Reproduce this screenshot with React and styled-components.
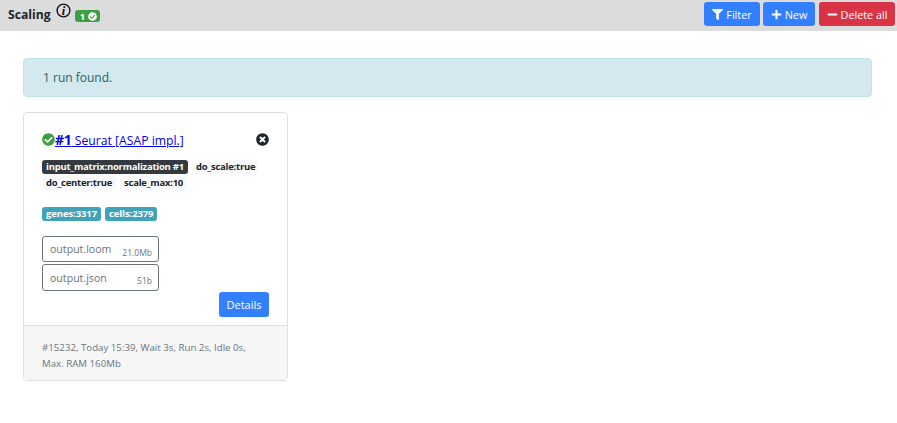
import React from "react";
import styled, { createGlobalStyle } from "styled-components";
import { FaFilter, FaPlus, FaMinus, FaCheckCircle, FaTimesCircle } from "react-icons/fa";

const GlobalStyle = createGlobalStyle`
  html, body {
    margin: 0;
    padding: 0;
    background: #fff;
    font-family: "Open Sans", "Noto Sans", sans-serif;
    color: #212529;
  }
  * { box-sizing: border-box; }
`;

const Header = styled.header`
  display: flex;
  justify-content: space-between;
  height: 31px;
  background: #dcdcdc;
  padding: 2px 2px 0 8px;
`;

const TitleGroup = styled.div`
  display: flex;
  align-items: flex-start;
`;

const Title = styled.h1`
  margin: 3px 0 0;
  font-size: 12.2px;
  line-height: 20px;
  font-weight: 700;
  color: #212529;
`;

const InfoIcon = styled.svg`
  width: 15px;
  height: 15px;
  margin: 1px 0 0 5px;
`;

const CountBadge = styled.span`
  display: inline-flex;
  align-items: center;
  gap: 3px;
  height: 12px;
  margin: 8px 0 0 4px;
  padding: 0 3px 0 5px;
  border-radius: 3px;
  background: #3f9f3f;
  color: #fff;
  font-size: 9.5px;
  font-weight: 700;
`;

const Actions = styled.div`
  display: flex;
  gap: 3px;
`;

const ActionButton = styled.button`
  display: flex;
  align-items: center;
  justify-content: center;
  gap: 3px;
  width: ${(p) => p.$width}px;
  height: 24px;
  margin-left: ${(p) => (p.$danger ? 1 : 0)}px;
  padding: 0;
  border: none;
  border-radius: 3px;
  background: ${(p) => (p.$danger ? "#d93347" : "#327fff")};
  color: #fff;
  font-family: inherit;
  font-size: 10.8px;
`;

const Main = styled.main`
  padding: 27px 25px 0 23px;
`;

const Alert = styled.div`
  height: 39px;
  margin-bottom: 15px;
  padding: 0 19px;
  display: flex;
  align-items: center;
  background: #d3e9ef;
  border: 1px solid #bee5eb;
  border-radius: 4px;
  color: #24616c;
  font-size: 12px;
`;

const Card = styled.section`
  width: 265px;
  height: 269px;
  display: flex;
  flex-direction: column;
  border: 1px solid #dfdfdf;
  border-radius: 4px;
  background: #fff;
`;

const CardBody = styled.div`
  flex: 1;
  display: flex;
  flex-direction: column;
  padding: 16px 18px 8px;
`;

const CardHead = styled.div`
  display: flex;
  align-items: center;
  justify-content: space-between;
  height: 20px;
  font-size: 13px;
`;

const RunTitle = styled.div`
  display: flex;
  align-items: center;
`;

const RunLink = styled.a`
  color: #0000ee;
  text-decoration: underline;
  font-size: 12.2px;
  b {
    font-size: 14px;
    font-weight: 700;
    letter-spacing: -0.2px;
  }
`;

const TagRow = styled.div`
  display: flex;
  flex-wrap: wrap;
  gap: 2px 4px;
  margin-top: ${(p) => p.$top}px;
`;

const tagSpacing = { dark: "-0.24px", light: "-0.25px", info: "-0.1px" };
const tagBackground = { dark: "#343a40", light: "#f8f9fa", info: "#3fa2b8" };

const Tag = styled.span`
  display: inline-block;
  padding: 0 4px;
  height: 14px;
  line-height: 14px;
  border-radius: 3px;
  font-size: 9.5px;
  font-weight: 700;
  white-space: nowrap;
  letter-spacing: ${(p) => tagSpacing[p.$kind]};
  color: ${(p) => (p.$kind === "light" ? "#212529" : "#fff")};
  background: ${(p) => tagBackground[p.$kind]};
`;

const FileBox = styled.div`
  width: 117px;
  height: ${(p) => (p.$tall ? 27 : 26)}px;
  padding: 0 6px 0 7px;
  display: flex;
  justify-content: space-between;
  border: 1px solid #6c757d;
  border-radius: 3px;
  color: #6c757d;
`;

const FileName = styled.span`
  font-size: 10.6px;
  line-height: ${(p) => (p.$tall ? 26 : 24)}px;
`;

const FileSize = styled.span`
  font-size: 8.5px;
  line-height: 12px;
  margin-top: 10px;
`;

const Files = styled.div`
  display: flex;
  flex-direction: column;
  gap: 2px;
  margin-top: 15px;
`;

const DetailsRow = styled.div`
  display: flex;
  justify-content: flex-end;
  margin-top: 1px;
`;

const DetailsButton = styled.button`
  width: 50px;
  height: 25px;
  padding: 0;
  border: none;
  border-radius: 3px;
  background: #327fff;
  color: #fff;
  font-family: inherit;
  font-size: 11px;
`;

const CardFooter = styled.footer`
  height: 55px;
  padding: 14px 18px 0;
  background: #f6f6f6;
  border-top: 1px solid #dfdfdf;
  color: #6c757d;
  font-size: 9.7px;
  line-height: 16px;
`;

export default function App() {
  return (
    <>
      <GlobalStyle />
      <Header>
        <TitleGroup>
          <Title>Scaling</Title>
          <InfoIcon viewBox="0 0 15 15">
            <circle cx="7.5" cy="7.5" r="6.4" fill="none" stroke="#111" strokeWidth="1.4" />
            <text x="7.5" y="11.6" textAnchor="middle" fontFamily="Liberation Serif" fontStyle="italic" fontWeight="700" fontSize="12.5" fill="#111">i</text>
          </InfoIcon>
          <CountBadge>
            1 <FaCheckCircle size={9} />
          </CountBadge>
        </TitleGroup>
        <Actions>
          <ActionButton $width={56}><FaFilter size={11} /> Filter</ActionButton>
          <ActionButton $width={52}><FaPlus size={11} /> New</ActionButton>
          <ActionButton $width={76} $danger><FaMinus size={11} /> Delete all</ActionButton>
        </Actions>
      </Header>
      <Main>
        <Alert>1 run found.</Alert>
        <Card>
          <CardBody>
            <CardHead>
              <RunTitle>
                <FaCheckCircle size={13} color="#3f9f3f" />
                <RunLink href="#"><b>#1</b> Seurat [ASAP impl.]</RunLink>
              </RunTitle>
              <FaTimesCircle size={13} color="#212529" />
            </CardHead>
            <TagRow $top={11}>
              <Tag $kind="dark">input_matrix:normalization #1</Tag>
              <Tag $kind="light">do_scale:true</Tag>
              <Tag $kind="light">do_center:true</Tag>
              <Tag $kind="light">scale_max:10</Tag>
            </TagRow>
            <TagRow $top={17}>
              <Tag $kind="info">genes:3317</Tag>
              <Tag $kind="info">cells:2379</Tag>
            </TagRow>
            <Files>
              <FileBox><FileName>output.loom</FileName><FileSize>21.0Mb</FileSize></FileBox>
              <FileBox $tall><FileName $tall>output.json</FileName><FileSize>51b</FileSize></FileBox>
            </Files>
            <DetailsRow><DetailsButton>Details</DetailsButton></DetailsRow>
          </CardBody>
          <CardFooter>
            #15232, Today 15:39, Wait 3s, Run 2s, Idle 0s,
            <br />
            Max. RAM 160Mb
          </CardFooter>
        </Card>
      </Main>
    </>
  );
}
